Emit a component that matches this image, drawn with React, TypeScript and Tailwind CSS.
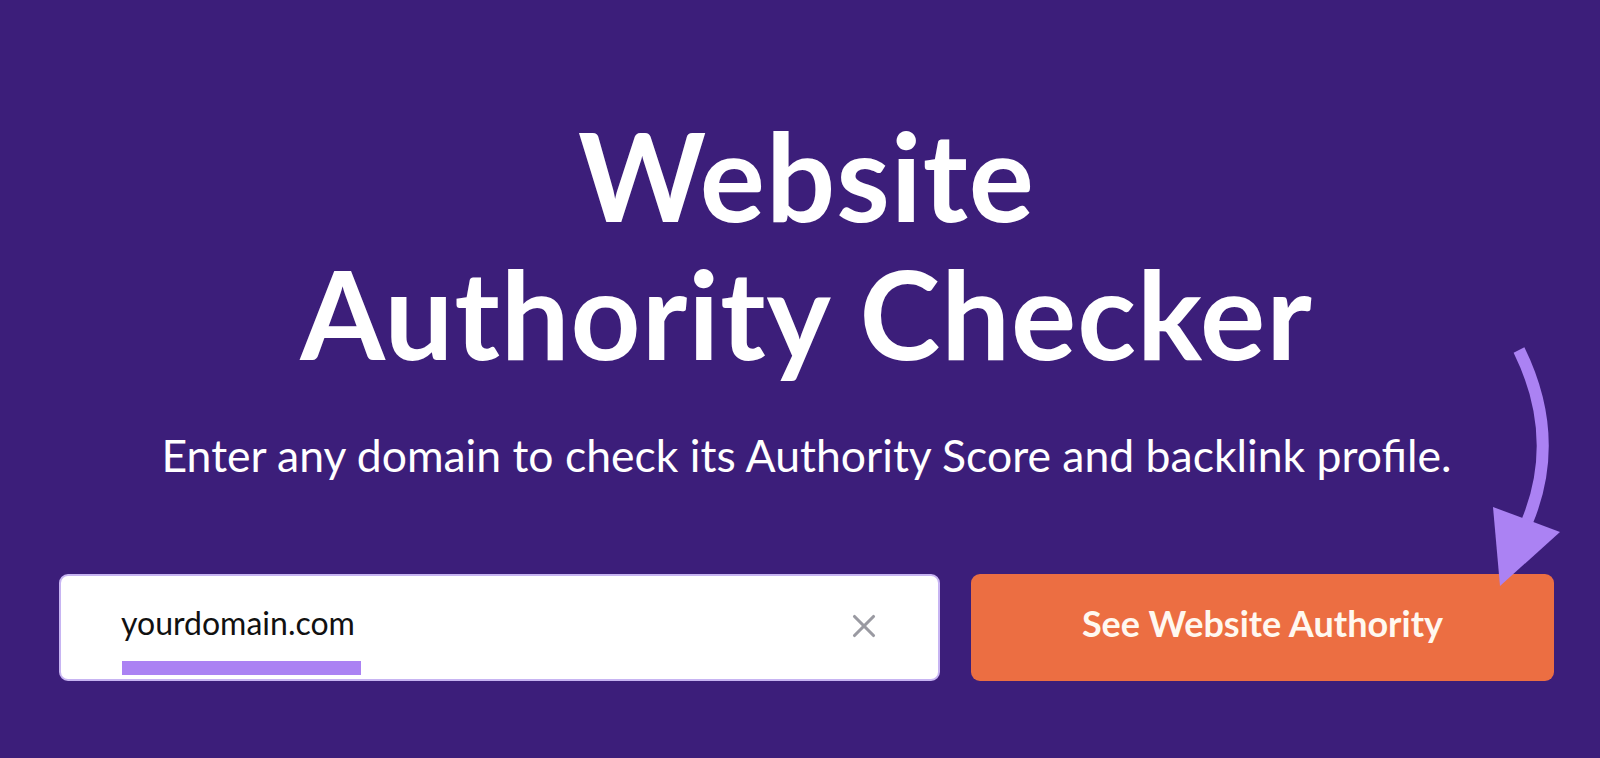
import { X } from "lucide-react";

const font = { fontFamily: '"Lato", "Noto Sans", sans-serif' };

function CurvedArrow() {
  return (
    <svg
      className="pointer-events-none absolute left-0 top-0"
      width="1600"
      height="758"
      viewBox="0 0 1600 758"
    >
      <path
        d="M1519 350 C1546 405 1552 462 1527 522"
        fill="none"
        stroke="#ab82f3"
        strokeWidth="12"
      />
      <polygon points="1493,507 1560,532 1500,586" fill="#ab82f3" />
    </svg>
  );
}

export default function App() {
  return (
    <div
      className="relative h-[758px] w-[1600px] overflow-hidden bg-[#3c1e7a] text-white"
      style={font}
    >
      <div className="flex flex-col items-center pl-[59px] pr-[46px] pt-[106px]">
        <h1 className="text-center text-[122px] font-bold leading-[138px] tracking-[1px]">
          Website
          <br />
          Authority Checker
        </h1>

        <p className="mt-[47px] text-center text-[44.5px] leading-[52px]">
          Enter any domain to check its Authority Score and backlink profile.
        </p>

        <div className="mt-[93px] flex w-full gap-[31px]">
          <div className="relative flex h-[107px] flex-1 items-center rounded-[9px] border-2 border-[#c7b4f2] bg-white pl-[60px] pr-[55px]">
            <span className="mb-[10px] text-[32px] text-[#111]">yourdomain.com</span>
            <div className="absolute bottom-[4px] left-[61px] h-[14px] w-[239px] bg-[#ab82f3]" />
            <X className="mb-[4px] ml-auto h-[38px] w-[38px] text-[#9a9aa2]" strokeWidth={2} />
          </div>
          <button className="h-[107px] w-[583px] rounded-[9px] bg-[#ec6e42] pb-[10px] text-[36px] font-bold text-[#fff8f0]">
            See Website Authority
          </button>
        </div>
      </div>
      <CurvedArrow />
    </div>
  );
}
